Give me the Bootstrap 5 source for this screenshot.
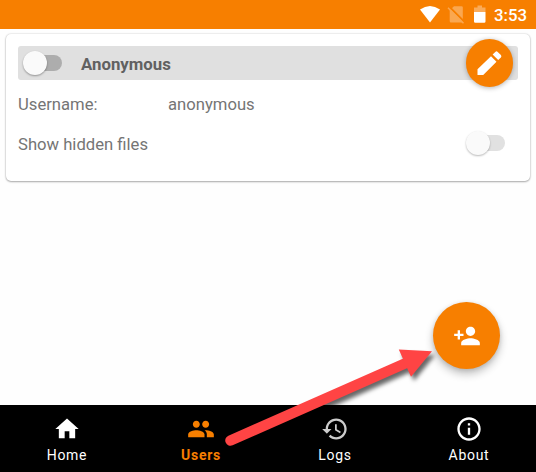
<!DOCTYPE html>
<html lang="en">
<head>
<meta charset="utf-8">
<meta name="viewport" content="width=device-width, initial-scale=1">
<title>Users</title>
<link href="https://cdn.jsdelivr.net/npm/bootstrap@5.3.0/dist/css/bootstrap.min.css" rel="stylesheet">
<style>
body{font-family:Roboto,sans-serif;font-size:16.65px;line-height:20px;color:#757575;background:#fefefe;height:472px;overflow:hidden}
.status-bar{height:28.5px;background:#f77f00;color:#fff;font-weight:500;padding-right:10px;flex:none}
.clock{font-size:16.8px;line-height:28px;padding-top:1px;width:32px;white-space:nowrap}
.user-card{margin:5.5px 6px 0;height:147px;padding:12px 12px 0;border:0;border-radius:5px;background:#fff;box-shadow:0 1px 2px rgba(0,0,0,.3),0 0 2px rgba(0,0,0,.2);color:inherit}
.user-head{height:34px;background:#e0e0e0;border-radius:3px;padding-left:5px;color:#616161}
.user-name{margin-left:19px;padding-top:2px;font-size:16.8px}
.toggle{width:39px;height:24px;flex:none;display:flex;align-items:center;border:0;padding:0;background:none}
.toggle::before{content:"";flex:none;width:24px;height:24px;border-radius:50%;background:#fafafa;box-shadow:0 1px 2px rgba(0,0,0,.35);z-index:1}
.toggle::after{content:"";flex:none;width:27px;height:16.5px;margin-left:-12px;border-radius:0 9px 9px 0;background:#adadad}
.toggle.pale{margin-right:13px;margin-bottom:4px}
.toggle.pale::after{background:#e1e1e1}
.toggle.pale::before{box-shadow:0 1px 2px rgba(0,0,0,.28)}
.field-row{height:40px}
.field-row.first{margin-top:5px}
.field-label{width:150px}
.fab{position:absolute;border:0;padding:0;border-radius:50%;background:#f77f00;color:#fff;display:flex;align-items:center;justify-content:center}
.fab-edit{left:465.5px;top:39px;width:47.8px;height:47.8px;box-shadow:0 1px 5px rgba(0,0,0,.3)}
.fab-add{left:433.2px;top:302.4px;width:66.8px;height:66.8px;box-shadow:0 5px 9px rgba(0,0,0,.24),0 1px 4px rgba(0,0,0,.12)}
.tabs{height:67px;background:#000;font-size:14px;line-height:16px;letter-spacing:.7px;flex:none}
.tabs a{color:#fff;padding-top:10px}
.tabs a svg{margin-bottom:4px}
.tabs a.current{color:#f77f00}
.tabs .dim{color:#ccc}
.pointer{position:absolute;left:0;top:0;pointer-events:none}
</style>
<script src="https://cdn.jsdelivr.net/npm/bootstrap@5.3.0/dist/js/bootstrap.bundle.min.js"></script>
</head>
<body class="d-flex flex-column position-relative">
<header class="status-bar d-flex justify-content-end">
  <svg width="76" height="28" viewBox="418 0 76 28" fill="#fff">
    <path d="M420 9.600Q430 2.400 440 9.600L430 22.500Z"/>
    <path fill="#faa750" d="M454 6.200H461.500Q462.800 6.200 462.800 7.500V22.500H451Q449.700 22.500 449.700 21V10.200Z"/>
    <path d="M449.500 7L465 22.500" stroke="#f77f00" stroke-width="2"/>
    <path d="M448 7.800L463.500 23.300" stroke="#faa750" stroke-width="1.500"/>
    <path opacity=".35" d="M474 7.500h3.500V5.500h4.500v2h3.500V12H474z"/><path d="M474 12h11.500v9.500q0 1.300-1.300 1.300h-8.900q-1.300 0-1.300-1.300z"/>
  </svg>
  <span class="clock">3:53</span>
</header>
<main class="flex-grow-1">
  <section class="card user-card">
    <div class="user-head d-flex align-items-center">
      <button class="toggle" aria-label="Enable user"></button>
      <strong class="user-name">Anonymous</strong>
    </div>
    <div class="field-row first d-flex align-items-center"><span class="field-label">Username:</span><span>anonymous</span></div>
    <div class="field-row d-flex align-items-center justify-content-between"><span>Show hidden files</span><button class="toggle pale" aria-label="Show hidden files"></button></div>
  </section>
</main>
<nav class="tabs row g-0 text-center">
  <a class="col d-flex flex-column align-items-center text-decoration-none" href="#"><svg width="28" height="28" viewBox="0 0 24 24" fill="currentColor"><path d="M10 20v-6h4v6h5v-8h3L12 3 2 12h3v8z"/></svg>Home</a>
  <a class="col d-flex flex-column align-items-center text-decoration-none current fw-bold" href="#"><svg width="28" height="28" viewBox="0 0 24 24" fill="currentColor"><path d="M16 11c1.660 0 2.990-1.340 2.990-3S17.660 5 16 5s-3 1.340-3 3 1.340 3 3 3zm-8 0c1.660 0 2.990-1.340 2.990-3S9.660 5 8 5 5 6.340 5 8s1.340 3 3 3zm0 2c-2.330 0-7 1.170-7 3.500V19h14v-2.500c0-2.330-4.670-3.500-7-3.500zm8 0c-.29 0-.62.02-.97.05 1.160.84 1.970 1.970 1.970 3.450V19h6v-2.500c0-2.330-4.670-3.500-7-3.500z"/></svg>Users</a>
  <a class="col d-flex flex-column align-items-center text-decoration-none" href="#"><svg class="dim" width="28" height="28" viewBox="0 0 24 24" fill="currentColor"><path d="M13 3c-4.970 0-9 4.030-9 9H1l3.890 3.890.07.14L9 12H6c0-3.870 3.130-7 7-7s7 3.130 7 7-3.130 7-7 7c-1.930 0-3.680-.79-4.940-2.060l-1.420 1.420C8.270 19.990 10.510 21 13 21c4.970 0 9-4.030 9-9s-4.030-9-9-9zm-1 5v5l4.280 2.540.72-1.210-3.500-2.080V8z"/></svg>Logs</a>
  <a class="col d-flex flex-column align-items-center text-decoration-none" href="#"><svg width="28" height="28" viewBox="0 0 24 24" fill="currentColor"><path d="M11 17h2v-6h-2v6zm1-15C6.480 2 2 6.480 2 12s4.480 10 10 10 10-4.480 10-10S17.520 2 12 2zm0 18c-4.410 0-8-3.590-8-8s3.590-8 8-8 8 3.590 8 8-3.590 8-8 8zM11 9h2V7h-2v2z"/></svg>About</a>
</nav>
<button class="fab fab-edit" aria-label="Edit"><svg width="32" height="32" viewBox="0 0 32 32" fill="currentColor"><path d="M4.500 22.300L18 9.200 23.500 14.700 10.200 28H4.500ZM19.600 7.600L22.300 4.900Q23.500 3.800 24.700 4.900L27.900 8.100Q28.900 9.300 27.900 10.400L25.200 13.100Z"/></svg></button>
<button class="fab fab-add" aria-label="Add user"><svg width="28" height="28" viewBox="0 0 24 24" fill="currentColor"><path d="M15 12c2.210 0 4-1.790 4-4s-1.790-4-4-4-4 1.790-4 4 1.790 4 4 4zm-9-2V7H4v3H1v2h3v3h2v-3h3v-2H6zm9 4c-2.670 0-8 1.340-8 4v2h16v-2c0-2.660-5.330-4-8-4z"/></svg></button>
<svg class="pointer" width="536" height="472" viewBox="0 0 536 472">
  <defs><filter id="soft" x="-10%" y="-10%" width="120%" height="130%" color-interpolation-filters="sRGB"><feDropShadow dx="3" dy="4" stdDeviation="2.200" flood-color="#000" flood-opacity=".6"/></filter></defs>
  <g filter="url(#soft)" fill="#ff4444"><path d="M230.500 440.500L406 363" stroke="#ff4444" stroke-width="10.500" stroke-linecap="round"/><path d="M432 351.300L398.800 349.500 411 376.800Z"/></g>
</svg>
</body>
</html>
